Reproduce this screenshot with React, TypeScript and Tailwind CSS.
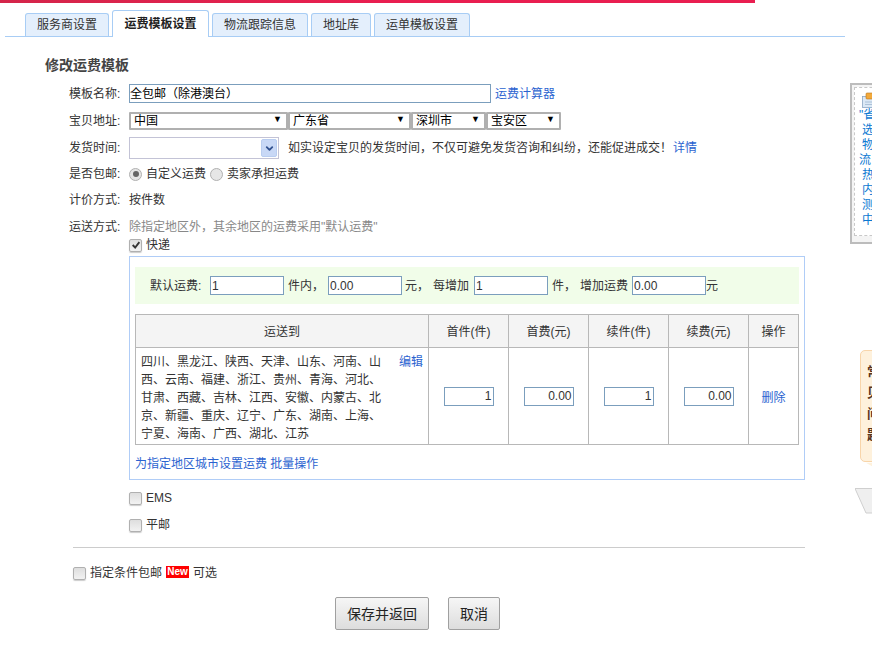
import React from 'react';
import { ChevronDown } from 'lucide-react';

const font = 'font-["Liberation_Sans","Noto_Sans_CJK_SC",sans-serif]';
const link = 'text-[#2b63d0]';
const tabs = [
    { label: '服务商设置', w: 'w-[84px]', active: false },
    { label: '运费模板设置', w: 'w-[97px]', active: true },
    { label: '物流跟踪信息', w: 'w-[96px]', active: false },
    { label: '地址库', w: 'w-[60px]', active: false },
    { label: '运单模板设置', w: 'w-[96px]', active: false },
];
const thStyle = 'border border-[#b8b8b8] bg-[#f4f4f4] font-normal pt-[2px]';

const Select = ({ value, w }: { value: string; w: string }) => (
    <div className={`${w} h-[18px] border-2 border-[#b0b0b0] rounded-[1px] flex items-center justify-between pl-[3px] pr-[4px] text-black`}>
        <span>{value}</span>
        <span className="text-[9px] leading-none mb-[3px]">▼</span>
    </div>
);

const TextInput = ({ value, w, right }: { value: string; w: string; right?: boolean }) => (
    <div className={`${w} h-[19px] border border-[#7b9ebd] bg-white flex items-center px-[1px] leading-none text-[#333] ${right ? 'justify-end' : ''}`}>
        {value}
    </div>
);

const Check = ({ checked }: { checked?: boolean }) => (
    <span className="w-[13px] h-[13px] shrink-0 rounded-[2px] border border-[#b0b0b0] bg-gradient-to-b from-[#dedede] to-[#f2f2f2] flex items-center justify-center shadow-[0_1px_1px_#ccc]">
        {checked && (
            <svg viewBox="0 0 12 12" className="w-[10px] h-[10px]">
                <path d="M2 6 L5 9 L10 2.5" fill="none" stroke="#333" strokeWidth="2.2" />
            </svg>
        )}
    </span>
);

const Radio = ({ checked }: { checked?: boolean }) => (
    <span className="w-[13px] h-[13px] shrink-0 rounded-full border border-[#b0b0b0] bg-[#e6e6e6] flex items-center justify-center">
        {checked && <span className="w-[6px] h-[6px] rounded-full bg-[#666]" />}
    </span>
);

const Row = ({ label, h, children }: { label: string; h: string; children: React.ReactNode }) => (
    <div className={`flex items-center ${h}`}>
        <div className="w-[129px] pl-[69px] shrink-0">{label}:</div>
        {children}
    </div>
);

export default function App() {
    return (
        <div className={`relative w-[872px] h-[656px] overflow-hidden bg-white text-[12px] leading-[18px] text-[#333] ${font}`}>
            <div className="w-[755px] h-[3px] bg-gradient-to-r from-[#d4254a] via-[#e91e50] to-[#e91e50]" />

            {/* Tabs */}
            <div className="ml-[5px] w-[840px] h-[34px] border-b border-[#a8cdf5] flex items-end pl-[20px] gap-[3px]">
                {tabs.map(t => (
                    <div
                        key={t.label}
                        className={t.active
                            ? `${t.w} h-[27px] -mb-px border border-b-0 border-[#a8cdf5] rounded-t-[3px] bg-white flex items-center justify-center font-bold text-[#222]`
                            : `${t.w} h-[23px] border border-b-0 border-[#a8cdf5] rounded-t-[3px] bg-[#e4effc] flex items-center justify-center`}
                    >
                        {t.label}
                    </div>
                ))}
            </div>

            {/* Form */}
            <div className="pt-[18px]">
                <h2 className="pl-[45px] text-[14px] leading-[20px] font-bold text-[#444] mb-[9px]">修改运费模板</h2>

                <Row label="模板名称" h="h-[19px]">
                    <div className="w-[362px] h-[19px] border border-[#7b9ebd] flex items-center text-black">全包邮（除港澳台）</div>
                    <span className={`${link} ml-[4px]`}>运费计算器</span>
                </Row>

                <div className="mt-[9px]">
                    <Row label="宝贝地址" h="h-[18px]">
                        <Select value="中国" w="w-[159px]" />
                        <Select value="广东省" w="w-[123px]" />
                        <Select value="深圳市" w="w-[75px]" />
                        <Select value="宝安区" w="w-[75px]" />
                    </Row>
                </div>

                <div className="mt-[7px]">
                    <Row label="发货时间" h="h-[22px]">
                        <div className="w-[150px] h-[22px] border border-[#c3c3d6] flex justify-end p-[1px]">
                            <div className="w-[16px] rounded-[2px] border border-[#b9cdf0] bg-[#c8d8f6] flex items-center justify-center">
                                <ChevronDown className="w-[11px] h-[11px] text-[#31518f]" strokeWidth={4} />
                            </div>
                        </div>
                        <span className="ml-[9px]">如实设定宝贝的发货时间，不仅可避免发货咨询和纠纷，还能促进成交！</span>
                        <span className={`${link} ml-[1px]`}>详情</span>
                    </Row>
                </div>

                <div className="mt-[6px]">
                    <Row label="是否包邮" h="h-[18px]">
                        <Radio checked />
                        <span className="ml-[4px]">自定义运费</span>
                        <span className="w-[4px]" />
                        <Radio />
                        <span className="ml-[4px]">卖家承担运费</span>
                    </Row>
                </div>

                <div className="mt-[8px]">
                    <Row label="计价方式" h="h-[18px]">按件数</Row>
                </div>

                <div className="mt-[9px]">
                    <Row label="运送方式" h="h-[18px]">
                        <span className="text-[#888]">除指定地区外，其余地区的运费采用"默认运费"</span>
                    </Row>
                </div>

                <div className="ml-[129px] flex items-center gap-[4px] h-[18px]">
                    <Check checked />
                    <span>快递</span>
                </div>

                {/* Express panel */}
                <div className="ml-[129px] mt-[2px] w-[676px] h-[224px] border border-[#b0cdf7] px-[5px] pt-[10px]">
                    <div className="h-[37px] bg-[#f1fde9] flex items-center pl-[15px]">
                        <span className="w-[60px] shrink-0">默认运费:</span>
                        <TextInput value="1" w="w-[74px]" />
                        <span className="ml-[4px]">件内，</span>
                        <span className="w-[4px]" />
                        <TextInput value="0.00" w="w-[74px]" />
                        <span className="ml-[3px]">元，</span>
                        <span className="ml-[4px] mr-[5px]">每增加</span>
                        <TextInput value="1" w="w-[74px]" />
                        <span className="ml-[4px]">件，</span>
                        <span className="ml-[4px] mr-[4px]">增加运费</span>
                        <TextInput value="0.00" w="w-[74px]" />
                        <span>元</span>
                    </div>

                    <table className="mt-[10px] w-[663px] table-fixed border-collapse">
                        <colgroup>
                            <col className="w-[293px]" />
                            <col className="w-[80px]" />
                            <col className="w-[80px]" />
                            <col className="w-[80px]" />
                            <col className="w-[80px]" />
                            <col className="w-[50px]" />
                        </colgroup>
                        <thead>
                            <tr className="h-[33px]">
                                <th className={thStyle}>运送到</th>
                                <th className={thStyle}>首件(件)</th>
                                <th className={thStyle}>首费(元)</th>
                                <th className={thStyle}>续件(件)</th>
                                <th className={thStyle}>续费(元)</th>
                                <th className={thStyle}>操作</th>
                            </tr>
                        </thead>
                        <tbody>
                            <tr className="h-[97px]">
                                <td className="border border-[#b8b8b8] pl-[5px] pr-[5px] pt-[4px]">
                                    <div className="flex justify-between">
                                        <div className="w-[244px]">四川、黑龙江、陕西、天津、山东、河南、山西、云南、福建、浙江、贵州、青海、河北、甘肃、西藏、吉林、江西、安徽、内蒙古、北京、新疆、重庆、辽宁、广东、湖南、上海、宁夏、海南、广西、湖北、江苏</div>
                                        <span className={link}>编辑</span>
                                    </div>
                                </td>
                                {['1', '0.00', '1', '0.00'].map((v, i) => (
                                    <td key={i} className="border border-[#b8b8b8]">
                                        <div className="flex justify-center">
                                            <TextInput value={v} w="w-[50px]" right />
                                        </div>
                                    </td>
                                ))}
                                <td className={`border border-[#b8b8b8] text-center pt-[3px] ${link}`}>删除</td>
                            </tr>
                        </tbody>
                    </table>

                    <div className={`${link} mt-[10px]`}>为指定地区城市设置运费 批量操作</div>
                </div>

                <div className="ml-[129px] mt-[9px] flex items-center gap-[4px] h-[18px]">
                    <Check />
                    <span>EMS</span>
                </div>
                <div className="ml-[129px] mt-[9px] flex items-center gap-[4px] h-[18px]">
                    <Check />
                    <span>平邮</span>
                </div>

                <div className="ml-[73px] mt-[13px] w-[732px] border-t border-[#cccccc]" />

                <div className="ml-[73px] mt-[16px] flex items-center h-[18px]">
                    <Check />
                    <span className="ml-[4px]">指定条件包邮</span>
                    <span className="ml-[4px] mb-[3px] w-[23px] h-[12px] bg-[#ff0000] text-white text-[10px] font-bold leading-[11px] text-center">New</span>
                    <span className="ml-[4px]">可选</span>
                </div>

                <div className="mt-[15px] flex pl-[335px] gap-[19px]">
                    <button className="w-[94px] h-[33px] border border-[#a0a0a0] rounded-[2px] bg-gradient-to-b from-[#f6f6f6] to-[#dddddd] text-[14px] text-[#222]">保存并返回</button>
                    <button className="w-[52px] h-[33px] border border-[#a0a0a0] rounded-[2px] bg-gradient-to-b from-[#f6f6f6] to-[#dddddd] text-[14px] text-[#222]">取消</button>
                </div>
            </div>

            {/* Right floating help box */}
            <div className="absolute left-[850px] top-[83px] w-[40px] h-[161px] border-2 border-r-0 border-[#bcbcbc] bg-[#f4f4f4] p-[2px]">
                <div className="h-[149px] border border-dashed border-[#c8c8c8] bg-white pl-[4px] text-[#0a78d2] leading-[15px]">
                    <svg viewBox="0 0 16 16" className="w-[16px] h-[16px] mt-[4px] ml-[3px]">
                        <rect x="0.5" y="4.5" width="13" height="11" fill="#dbe8f5" stroke="#8aa6c4" strokeWidth="0.8" />
                        <path d="M3 10h8M3 12.5h8" stroke="#9fb6cf" strokeWidth="0.8" />
                        <rect x="4" y="1" width="12" height="6" rx="1" fill="#f2a93b" stroke="#b8761c" strokeWidth="0.6" />
                    </svg>
                    <div>"省</div>
                    <div className="pl-[3px]">选</div>
                    <div className="pl-[3px]">物</div>
                    <div>流</div>
                    <div className="pl-[3px]">热</div>
                    <div className="pl-[3px]">内</div>
                    <div className="pl-[3px]">测</div>
                    <div className="pl-[3px]">中</div>
                </div>
            </div>

            {/* Right floating tip bubble */}
            <div className="absolute left-[860px] top-[350px] w-[30px] h-[112px] border border-[#f8d5aa] rounded-l-[5px] bg-[#fef1dc] pl-[6px] pt-[10px] font-bold text-[13px] text-[#5a3520] leading-[21px]">
                <div>常</div>
                <div>见</div>
                <div>问</div>
                <div>题</div>
            </div>
            <svg viewBox="0 0 10 6" className="absolute left-[866px] top-[461px] w-[6px] h-[7px]">
                <path d="M0 0 L10 0 L10 6 Z" fill="#fef1dc" />
            </svg>
            <svg viewBox="0 0 18 26" className="absolute left-[855px] top-[488px] w-[18px] h-[26px]">
                <path d="M0 0.5 L18 0.5 L18 25 L11 25 Z" fill="#efefef" stroke="#cfcfcf" />
            </svg>
        </div>
    );
}
